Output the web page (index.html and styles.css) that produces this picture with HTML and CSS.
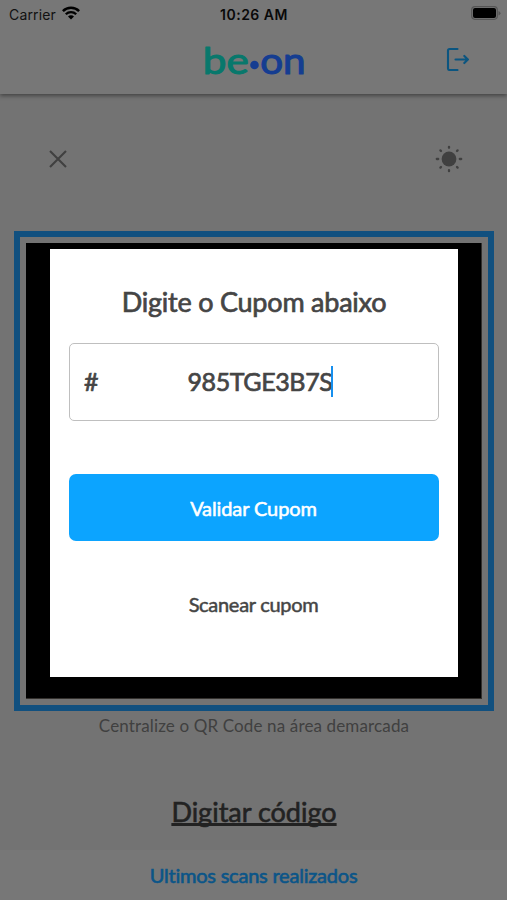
FILE: index.html
```html
<!DOCTYPE html>
<html lang="pt-BR">
<head>
<meta charset="utf-8">
<title>be.on</title>
<link rel="stylesheet" href="styles.css">
</head>
<body>
<div class="screen">
  <header class="header">
    <div class="status">
      <div class="carrier"><span>Carrier</span>
        <svg class="wifi" viewBox="0 0 18 14" width="18" height="14" fill="none" stroke="currentColor"><path d="M.9 5.100a11.500 11.500 0 0 1 16.200 0" stroke-width="2.500"/><path d="M3.800 8.200a7.400 7.400 0 0 1 10.400 0" stroke-width="2.300"/><path d="M6 10.500a4.200 4.200 0 0 1 6 0L9 13.600z" fill="currentColor" stroke="none"/></svg>
      </div>
      <div class="time">10:26 AM</div>
      <svg class="battery" width="30" height="15" viewBox="0 0 30 15"><rect x=".7" y=".7" width="25.600" height="12.600" rx="3.200" fill="none" stroke="#555" stroke-width="1.200"/><rect x="2" y="2" width="23" height="10" rx="2"/><path d="M27.500 5v4.500q2-.7 2-2.250t-2-2.250z" fill="#555"/></svg>
    </div>
    <div class="brandbar">
      <svg class="logo" width="120" height="60" viewBox="0 0 120 60">
        <g class="wordmark"><text x="8.800" y="42" textLength="46" lengthAdjust="spacingAndGlyphs" fill="#08786c" stroke="#08786c">be</text><circle cx="60.500" cy="33" r="4.300" fill="#153d91"/><text x="66.200" y="42" textLength="45.500" lengthAdjust="spacingAndGlyphs" fill="#153d91" stroke="#153d91">on</text></g>
      </svg>
      <svg class="logout" width="24" height="24" viewBox="0 0 24 24" fill="none" stroke="#0b5580" stroke-width="2.100" stroke-linecap="round" stroke-linejoin="round"><path d="M11.500 2H3.500Q2 2 2 3.500v18Q2 23 3.500 23h8M9.500 12.500H22M18.300 8.900l3.600 3.600-3.600 3.600"/></svg>
    </div>
  </header>
  <main class="scanner">
    <div class="tools">
      <svg width="18" height="18" viewBox="0 0 18 18" fill="none" stroke="#404040" stroke-width="2.100"><path d="M1 1l16 16M17 1L1 17"/></svg>
      <svg width="28" height="28" viewBox="0 0 28 28" fill="#404040" stroke="#404040" stroke-width="2.300" stroke-linecap="round"><circle cx="14" cy="14" r="7.400" stroke="none"/><path d="M14 1.800v1M14 25.200v1M1.800 14h1.400M24.800 14h1.400M5.400 5.400l.6.600M22 22l.6.600M22.600 5.400l-.6.600M6 22l-.6.600"/></svg>
    </div>
    <div class="frame">
      <div class="camera">
        <section class="modal">
          <h1>Digite o Cupom abaixo</h1>
          <div class="field"><span class="hash">#</span><span class="code">985TGE3B7S</span><i class="caret"></i></div>
          <button class="validate">Validar Cupom</button>
          <a class="scan">Scanear cupom</a>
        </section>
      </div>
    </div>
    <p class="hint">Centralize o QR Code na área demarcada</p>
    <a class="type-code">Digitar código</a>
  </main>
  <footer class="footer"><span>Ultimos scans realizados</span></footer>
</div>
</body>
</html>
```
FILE: styles.css
```css
* { box-sizing: border-box; }
body { margin: 0; font-family: Lato, sans-serif; font-variant-ligatures: no-common-ligatures; }
.screen { width: 507px; height: 900px; display: flex; flex-direction: column; background: #737373; overflow: hidden; }
.header { height: 94px; flex: none; background: #777; box-shadow: 0 2px 4px rgba(0,0,0,.4); }
.status { height: 28px; padding: 0 6px 0 9px; display: grid; grid-template-columns: 1fr auto 1fr; align-items: center; font-family: Inter, sans-serif; font-size: 14px; }
.carrier { display: flex; align-items: center; gap: 6px; color: #111; letter-spacing: .15px; }
.wifi { color: #000; margin-top: -2px; }
.time { font-weight: 600; color: #090909; letter-spacing: .5px; margin-right: 2px; }
.battery { justify-self: end; margin-top: -1px; }
.brandbar { height: 66px; padding: 4px 37px 0; display: grid; grid-template-columns: 1fr 120px 1fr; align-items: start; }
.logo { grid-column: 2; display: block; }
.wordmark text { font-family: Lato, sans-serif; font-size: 37px; font-weight: 400; stroke-width: 1.1px; stroke-linejoin: round; }
.logout { justify-self: end; margin-top: 15px; }
.scanner { flex: 1; display: flex; flex-direction: column; align-items: center; padding-left: 1px; }
.tools { width: 414px; height: 129px; display: flex; justify-content: space-between; align-items: center; position: relative; left: 2px; }
.frame { width: 480px; height: 480px; flex: none; margin-top: 8px; border: 6px solid #11507f; padding: 6px; }
.camera { height: 456px; background: #000; padding: 6px 24px 0; border: 1px solid #33302d; border-width: 0 1px 1px 0; }
.modal { width: 408px; height: 428px; background: #fff; padding: 36px 19px 0; display: flex; flex-direction: column; align-items: stretch; color: #454545; text-align: center; }
h1 { margin: 0; font-size: 27px; line-height: 34px; font-weight: 400; letter-spacing: -.22px; -webkit-text-stroke: .7px; }
.field { height: 78px; margin-top: 24px; border: 1.500px solid #bfbfbf; border-radius: 5px; display: flex; align-items: center; padding: 0 0 2px 14px; font-size: 25px; letter-spacing: -.4px; -webkit-text-stroke: .7px; }
.hash { width: 103.500px; text-align: left; }
.caret { width: 2px; height: 31px; background: #168fee; margin-left: -1px; }
.validate { height: 67px; margin: 53px 0 0; padding: 0 1px 0 0; border: 0; border-radius: 7px; background: #0ca4ff; color: #fff; font: 400 20px Lato, sans-serif; letter-spacing: -.1px; -webkit-text-stroke: .55px; }
.scan { margin: 50px 1px 0 0; font-size: 20px; line-height: 26px; letter-spacing: -.3px; -webkit-text-stroke: .5px; }
.hint { margin: 3px 0 0; font-size: 17px; line-height: 24px; color: #404040; letter-spacing: .14px; }
.type-code { margin-top: 57px; font-size: 27px; line-height: 34px; color: #222; text-decoration: underline; text-decoration-thickness: 2.500px; text-underline-offset: 1px; text-decoration-skip-ink: none; -webkit-text-stroke: .6px; }
.footer { height: 50px; flex: none; background: #777; display: flex; justify-content: center; align-items: center; padding-bottom: 1px; color: #0b5588; font-size: 20px; letter-spacing: -.22px; -webkit-text-stroke: .6px; }
```
